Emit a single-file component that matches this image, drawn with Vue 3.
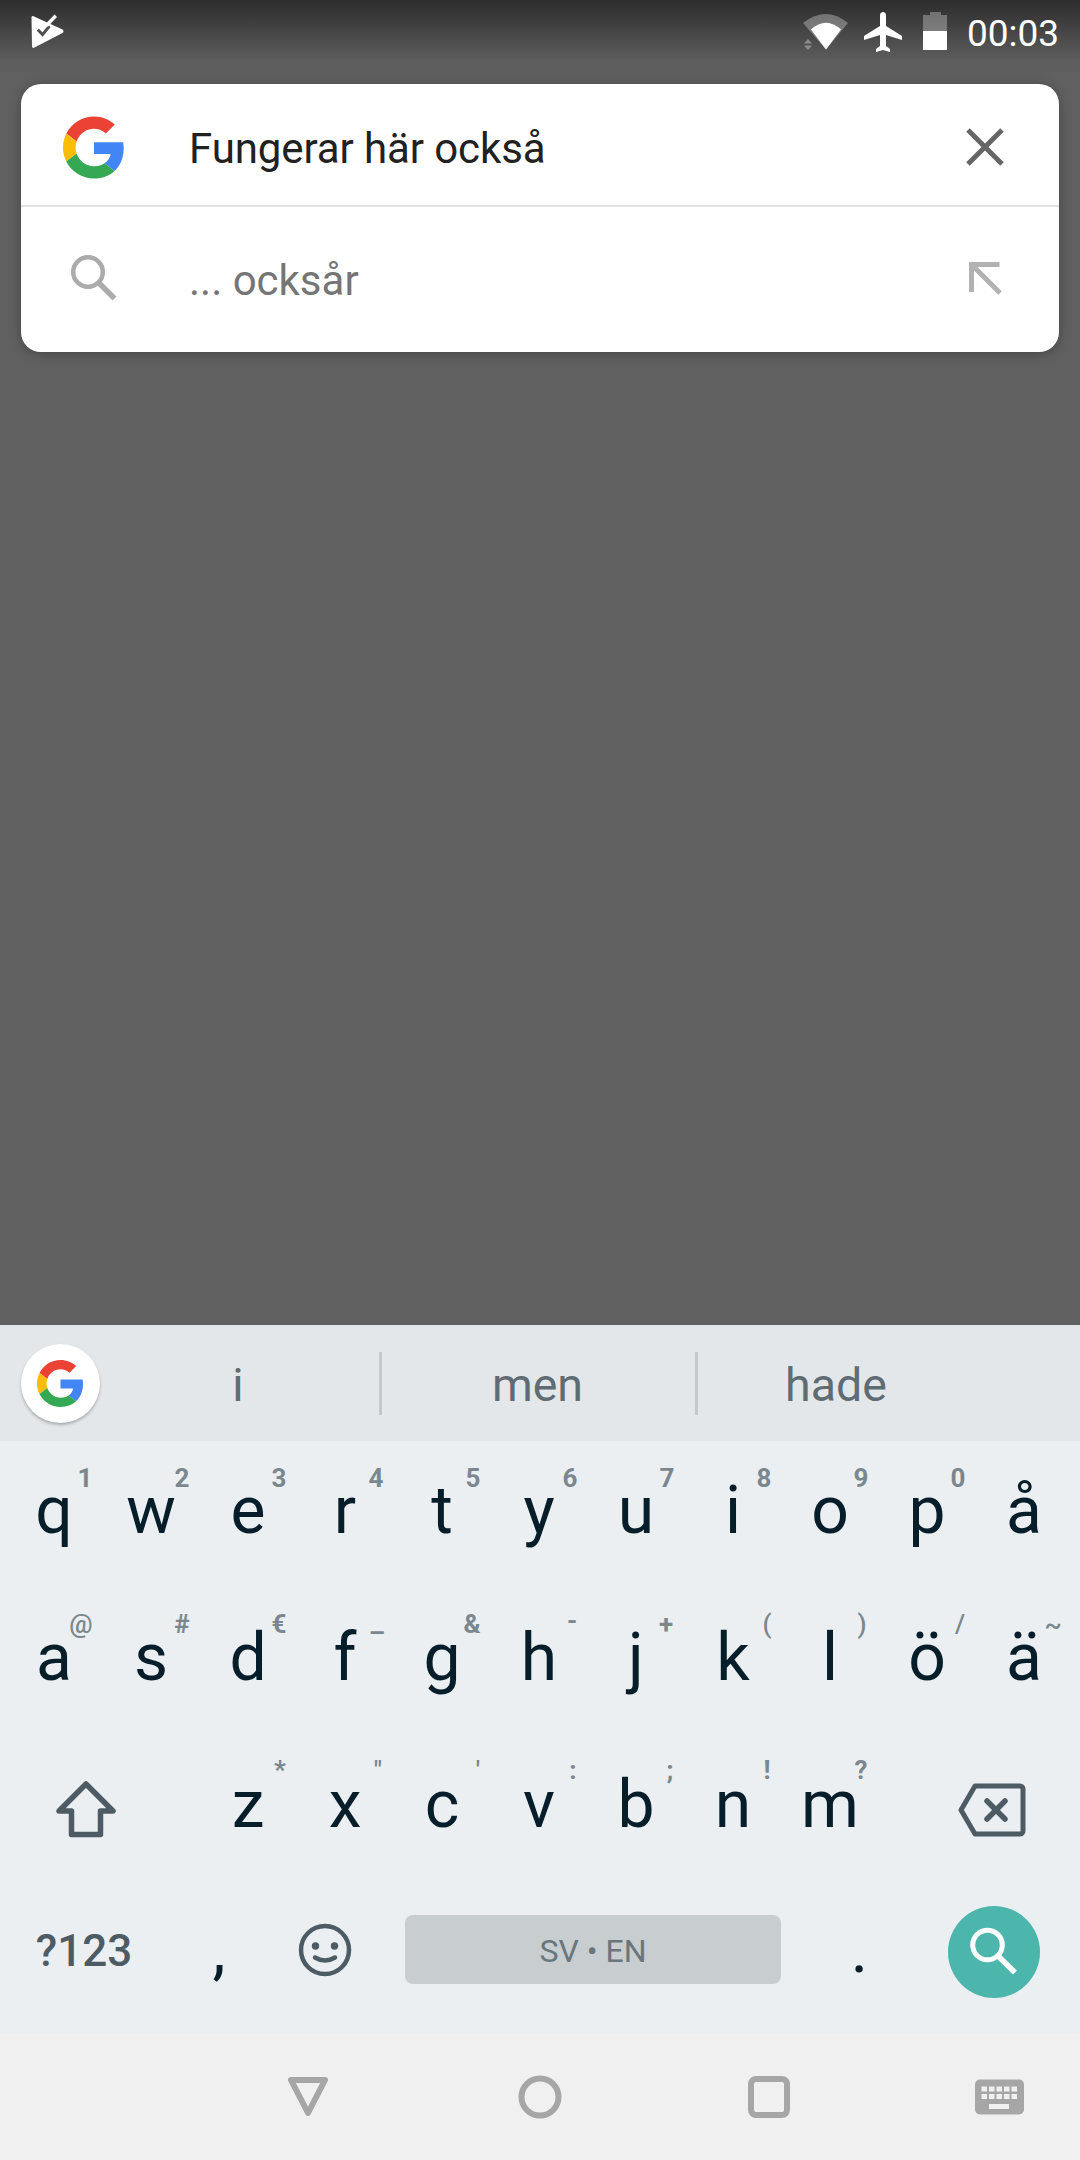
<script setup>
const row1 = [
  { k: 'q', h: '1' }, { k: 'w', h: '2' }, { k: 'e', h: '3' }, { k: 'r', h: '4' }, { k: 't', h: '5' },
  { k: 'y', h: '6' }, { k: 'u', h: '7' }, { k: 'i', h: '8' }, { k: 'o', h: '9' }, { k: 'p', h: '0' }, { k: 'å', h: '' }
].map((x) => ({ ...x, dx: 31, dy: 0 }))
const row2 = [
  { k: 'a', h: '@', dx: 27, dy: 0, thin: true }, { k: 's', h: '#', dx: 31, dy: 0 }, { k: 'd', h: '€', dx: 31, dy: 0 },
  { k: 'f', h: '–', dx: 32, dy: 9 }, { k: 'g', h: '&', dx: 30, dy: 0 }, { k: 'h', h: '-', dx: 33, dy: -3 },
  { k: 'j', h: '+', dx: 30, dy: 0 }, { k: 'k', h: '(', dx: 34, dy: 0, thin: true }, { k: 'l', h: ')', dx: 32, dy: 0, thin: true },
  { k: 'ö', h: '/', dx: 33, dy: 0, thin: true }, { k: 'ä', h: '~', dx: 29, dy: 1, thin: true }
]
const row3 = [
  { k: 'z', h: '*', dx: 32, dy: 0 }, { k: 'x', h: '"', dx: 33, dy: 0, thin: true }, { k: 'c', h: "'", dx: 36, dy: 0, thin: true },
  { k: 'v', h: ':', dx: 34, dy: 0 }, { k: 'b', h: ';', dx: 34, dy: 0 }, { k: 'n', h: '!', dx: 34, dy: 0 }, { k: 'm', h: '?', dx: 31, dy: 0 }
]
const hintStyle = (x, base) => ({ left: `calc(50% + ${x.dx}px)`, top: `${base + x.dy}px` })
const kbdKeys = [7.5, 15, 22.5, 30, 37.5]
</script>

<template>
  <div class="screen">
    <header class="status">
      <svg class="logo" width="36" height="38" viewBox="30 12 36 38">
        <path d="M33 16 L62.500 29.500 Q64.500 31.500 62.500 33 L34 47.800 Q32 48.300 32 46 L31.500 17 Q32 15.500 33 16Z" fill="#fff" />
        <path d="M37.800 29.800 L42.600 34.600 L49.500 26" fill="none" stroke="#505050" stroke-width="3" />
        <path d="M46.500 25.500 L55.800 15.800" fill="none" stroke="#fff" stroke-width="3.400" />
      </svg>
      <div class="status-right">
        <svg class="wifi" width="52" height="42" viewBox="0 0 52 42">
          <path d="M3 13 Q26 -5 48 13 L26 39.500Z" fill="#fff" opacity=".3" />
          <path d="M11 19.500 Q26 6 41 19.500 L26 39.500Z" fill="#fff" />
          <path d="M8 29 L12 33.500 H4Z M4 35.500 H12 L8 40Z" fill="#fff" opacity=".35" />
        </svg>
        <svg class="plane" width="48" height="48" viewBox="0 0 24 24">
          <path fill="#fff" d="M21 16v-2l-8-5V3.500c0-.83-.67-1.500-1.500-1.500S10 2.670 10 3.500V9l-8 5v2l8-2.500V19l-2 1.500V22l3.500-1 3.500 1v-1.500L13 19v-5.500l8 2.500z" />
        </svg>
        <svg class="battery" width="24" height="38" viewBox="0 0 24 38">
          <path d="M7 0H18V3H24V19H0V3H7Z" fill="#fff" opacity=".3" />
          <rect y="19" width="24" height="19" fill="#fff" />
        </svg>
        <span class="time">00:03</span>
      </div>
    </header>

    <section class="card">
      <div class="card-top">
        <svg class="g-large" width="62" height="63" viewBox="0 0 48 48">
          <path fill="#EA4335" d="M24 9.500c3.540 0 6.710 1.220 9.210 3.600l6.850-6.850C35.900 2.380 30.470 0 24 0 14.620 0 6.510 5.380 2.560 13.220l7.980 6.190C12.430 13.720 17.740 9.500 24 9.500z" />
          <path fill="#4285F4" d="M46.980 24.550c0-1.570-.15-3.090-.38-4.550H24v9.020h12.940c-.58 2.960-2.260 5.480-4.780 7.180l7.730 6c4.510-4.180 7.090-10.360 7.090-17.650z" />
          <path fill="#FBBC05" d="M10.530 28.590c-.48-1.450-.76-2.990-.76-4.590s.27-3.140.76-4.590l-7.980-6.190C.92 16.460 0 20.120 0 24c0 3.880.92 7.540 2.560 10.780l7.970-6.190z" />
          <path fill="#34A853" d="M24 48c6.480 0 11.930-2.130 15.890-5.810l-7.730-6c-2.150 1.450-4.920 2.300-8.160 2.300-6.260 0-11.570-4.220-13.470-9.910l-7.980 6.190C6.510 42.620 14.620 48 24 48z" />
        </svg>
        <span class="query">Fungerar här också</span>
        <svg class="right-icon" width="48" height="48" viewBox="0 0 48 48">
          <path d="M7 7L41 41M41 7L7 41" stroke="#666" stroke-width="5" fill="none" />
        </svg>
      </div>
      <div class="card-bottom">
        <svg class="search-gray" width="48" height="48" viewBox="0 0 48 48">
          <circle cx="18" cy="19" r="14.800" fill="none" stroke="#ababab" stroke-width="4.500" />
          <path d="M29 30L44.500 45.500" stroke="#ababab" stroke-width="5.500" fill="none" />
        </svg>
        <span class="suggestion">... ocksår</span>
        <svg class="right-icon arrow" width="48" height="48" viewBox="0 0 48 48">
          <path d="M38.500 10.500H10.500V38M10.500 10.500L39 39" stroke="#b2b2b2" stroke-width="5" fill="none" />
        </svg>
      </div>
    </section>

    <div class="spacer"></div>

    <section class="keyboard">
      <div class="suggest-bar">
        <div class="g-circle">
          <svg width="47" height="47" viewBox="0 0 48 48">
            <path fill="#EA4335" d="M24 9.500c3.540 0 6.710 1.220 9.210 3.600l6.850-6.850C35.900 2.380 30.470 0 24 0 14.620 0 6.510 5.380 2.560 13.220l7.980 6.190C12.430 13.720 17.740 9.500 24 9.500z" />
            <path fill="#4285F4" d="M46.980 24.550c0-1.570-.15-3.090-.38-4.550H24v9.020h12.940c-.58 2.960-2.260 5.480-4.780 7.180l7.730 6c4.510-4.180 7.090-10.360 7.090-17.650z" />
            <path fill="#FBBC05" d="M10.530 28.590c-.48-1.450-.76-2.990-.76-4.590s.27-3.140.76-4.590l-7.980-6.190C.92 16.460 0 20.120 0 24c0 3.880.92 7.540 2.560 10.780l7.970-6.190z" />
            <path fill="#34A853" d="M24 48c6.480 0 11.930-2.130 15.890-5.810l-7.730-6c-2.150 1.450-4.920 2.300-8.160 2.300-6.260 0-11.570-4.220-13.470-9.910l-7.980 6.190C6.510 42.620 14.620 48 24 48z" />
          </svg>
        </div>
        <span class="word w1">i</span>
        <span class="sep"></span>
        <span class="word w2">men</span>
        <span class="sep"></span>
        <span class="word w3">hade</span>
      </div>

      <div class="row">
        <div v-for="x in row1" :key="x.k" class="key">
          <span class="letter">{{ x.k }}</span>
          <span class="hint" :style="hintStyle(x, 22)">{{ x.h }}</span>
        </div>
      </div>
      <div class="row">
        <div v-for="x in row2" :key="x.k" class="key">
          <span class="letter">{{ x.k }}</span>
          <span class="hint" :class="{ thin: x.thin }" :style="hintStyle(x, 21)">{{ x.h }}</span>
        </div>
      </div>
      <div class="row row3">
        <div class="shift-key">
          <svg width="64" height="64" viewBox="0 0 64 64">
            <path d="M32 7L59 34H46.500V57.500H17.500V34H5Z" fill="none" stroke="#4d5c64" stroke-width="5.500" stroke-linejoin="round" />
          </svg>
        </div>
        <div v-for="x in row3" :key="x.k" class="key">
          <span class="letter">{{ x.k }}</span>
          <span class="hint" :class="{ thin: x.thin }" :style="hintStyle(x, 20)">{{ x.h }}</span>
        </div>
        <div class="back-key">
          <svg width="72" height="60" viewBox="0 0 72 60">
            <path d="M18 7H63a3 3 0 0 1 3 3V52a3 3 0 0 1-3 3H18L4 31Z" fill="none" stroke="#4d5c64" stroke-width="5" stroke-linejoin="round" />
            <path d="M30 22L48 40M48 22L30 40" stroke="#4d5c64" stroke-width="5.500" stroke-linecap="round" fill="none" />
          </svg>
        </div>
      </div>
      <div class="row4">
        <div class="sym">?123</div>
        <div class="comma">,</div>
        <div class="emoji">
          <svg width="60" height="60" viewBox="0 0 60 60">
            <circle cx="30" cy="30" r="24" fill="none" stroke="#4d5c64" stroke-width="4.500" />
            <circle cx="20.500" cy="26" r="3.700" fill="#4d5c64" />
            <circle cx="39.500" cy="26" r="3.700" fill="#4d5c64" />
            <path d="M20 37.500Q30 43.500 40 37.500" fill="none" stroke="#4d5c64" stroke-width="4.500" stroke-linecap="round" />
          </svg>
        </div>
        <div class="space">SV • EN</div>
        <div class="period">.</div>
        <div class="fab">
          <svg width="92" height="92" viewBox="0 0 92 92">
            <circle cx="39.500" cy="39" r="14.800" fill="none" stroke="#fff" stroke-width="5" />
            <path d="M50 50L67 66.500" stroke="#fff" stroke-width="5.500" fill="none" />
          </svg>
        </div>
      </div>
    </section>

    <nav class="nav">
      <svg class="n-back" width="44" height="44" viewBox="0 0 44 44">
        <path d="M5 5H39L22 38Z" fill="none" stroke="#a6a6a6" stroke-width="6" stroke-linejoin="round" />
      </svg>
      <svg class="n-home" width="44" height="44" viewBox="0 0 44 44">
        <circle cx="22" cy="22" r="18.500" fill="none" stroke="#a6a6a6" stroke-width="6" />
      </svg>
      <svg class="n-recent" width="44" height="44" viewBox="0 0 44 44">
        <rect x="4" y="4" width="36" height="36" rx="5" fill="none" stroke="#a6a6a6" stroke-width="6" />
      </svg>
      <svg class="n-kbd" width="50" height="36" viewBox="0 0 50 36">
        <rect width="49" height="35" x="0" y="0.500" rx="5" fill="#a6a6a6" />
        <template v-for="kx in kbdKeys" :key="kx">
          <rect :x="kx - 1" y="7.500" width="5.500" height="5" fill="#f0f0f0" />
          <rect :x="kx - 1" y="15" width="5.500" height="5" fill="#f0f0f0" />
        </template>
        <rect x="14" y="25" width="20" height="5" fill="#f0f0f0" />
      </svg>
    </nav>
  </div>
</template>

<style scoped>
.screen {
  width: 1080px;
  height: 2160px;
  display: flex;
  flex-direction: column;
  overflow: hidden;
  background: linear-gradient(#2c2c2c 0, #5e5e5e 62px, #606060 84px);
  font-family: Roboto, "Liberation Sans", sans-serif;
}
.status {
  height: 84px;
  flex: none;
  display: flex;
  align-items: flex-start;
  padding: 0 20px 0 30px;
  box-sizing: border-box;
}
.logo { margin-top: 12px; }
.status-right { margin-left: auto; display: flex; align-items: flex-start; }
.wifi { margin-top: 10px; }
.plane { margin: 8px 0 0 8px; }
.battery { margin: 12px 0 0 15px; }
.time {
  margin: 12px 0 0 20px;
  color: #fff;
  font-size: 37px;
  line-height: 44px;
  width: 93px;
  white-space: nowrap;
}
.card {
  margin: 0 21px;
  height: 268px;
  flex: none;
  background: #fff;
  border-radius: 20px;
  box-shadow: 0 2px 12px rgba(0, 0, 0, .28);
  display: flex;
  flex-direction: column;
}
.card-top {
  height: 123px;
  box-sizing: border-box;
  padding: 5px 0 0 42px;
  display: flex;
  align-items: center;
  border-bottom: 2px solid #e0e0e0;
  flex: none;
}
.g-large { flex: none; }
.query {
  margin: 2px 0 0 64px;
  font-size: 42px;
  letter-spacing: -0.1px;
  color: #212121;
  white-space: nowrap;
  width: 600px;
}
.right-icon { margin-left: auto; margin-right: 50px; flex: none; }
.card-bottom {
  flex: 1;
  display: flex;
  align-items: center;
  padding-left: 49px;
}
.search-gray { flex: none; margin-bottom: 6px; }
.suggestion {
  margin-left: 71px;
  padding-top: 2px;
  font-size: 42px;
  color: #757575;
  white-space: nowrap;
}
.arrow { margin-bottom: 4px; }
.spacer { flex: 1; }
.keyboard { flex: none; background: #ebeff2; }
.suggest-bar {
  height: 116px;
  background: #e3e7ea;
  display: flex;
  align-items: center;
  padding-left: 21px;
}
.g-circle {
  width: 79px;
  height: 79px;
  flex: none;
  border-radius: 50%;
  background: #fff;
  box-shadow: 0 2px 3px rgba(0, 0, 0, .25);
  display: flex;
  align-items: center;
  justify-content: center;
}
.word {
  font-size: 46.500px;
  color: #5f6c73;
  text-align: center;
  padding-top: 4px;
}
.w1 { width: 276px; }
.w2 { width: 313px; padding-right: 2px; box-sizing: border-box; }
.w3 { width: 276px; }
.sep { width: 3px; height: 63px; background: #c3c8cb; flex: none; }
.w1 + .sep { margin-left: 3px; }
.row {
  height: 147px;
  display: grid;
  grid-template-columns: repeat(11, 97px);
  padding-left: 5.500px;
}
.row3 {
  display: flex;
  padding-left: 5.500px;
}
.row3 .key { width: 97px; flex: none; }
.shift-key {
  width: 161px;
  margin-right: 33px;
  flex: none;
  display: flex;
  align-items: center;
  justify-content: center;
}
.back-key {
  width: 150px;
  margin-left: 39.500px;
  flex: none;
  display: flex;
  align-items: center;
  justify-content: center;
}
.key {
  position: relative;
  display: flex;
  align-items: center;
  justify-content: center;
  padding-bottom: 8px;
  box-sizing: border-box;
}
.letter {
  font-size: 66px;
  line-height: 139px;
  color: #061e2a;
}
.hint {
  position: absolute;
  transform: translateX(-50%);
  font-size: 26px;
  line-height: 30px;
  font-weight: 700;
  color: #7b878e;
}
.hint.thin { font-weight: 500; }
.row4 {
  height: 151px;
  display: flex;
  align-items: center;
}
.sym {
  width: 168px;
  flex: none;
  text-align: center;
  font-size: 44px;
  font-weight: 500;
  color: #4d5c64;
  padding-bottom: 13px;
}
.comma, .period {
  flex: none;
  text-align: center;
  font-size: 66px;
  color: #061e2a;
  padding-bottom: 16px;
}
.comma { width: 102px; }
.period { width: 157px; }
.emoji {
  width: 110px;
  flex: none;
  display: flex;
  justify-content: center;
  margin-bottom: 16px;
}
.space {
  width: 376px;
  height: 69px;
  margin: 0 0 16px 25px;
  flex: none;
  box-sizing: border-box;
  padding-top: 2px;
  background: #c8cdd0;
  border-radius: 8px;
  display: flex;
  align-items: center;
  justify-content: center;
  font-size: 32px;
  color: #69767c;
}
.fab {
  width: 92px;
  height: 92px;
  margin: 0 0 11px 10px;
  flex: none;
  background: #4db6ac;
  border-radius: 50%;
}
.fab svg { display: block; }
.nav {
  height: 127px;
  flex: none;
  background: #f0f0f0;
  display: flex;
  align-items: center;
}
.n-back { margin-left: 286px; }
.n-home { margin-left: 188px; }
.n-recent { margin-left: 185px; }
.n-kbd { margin-left: 184px; }
</style>
